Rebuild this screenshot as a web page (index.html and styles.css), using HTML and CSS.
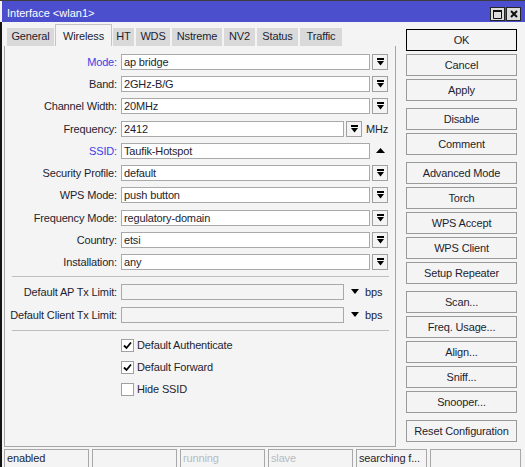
FILE: index.html
```html
<!DOCTYPE html>
<html>
<head>
<meta charset="utf-8">
<title>Interface</title>
<link rel="stylesheet" href="styles.css">
</head>
<body>
<div class="window">
  <div class="titlebar">
    <span class="title">Interface &lt;wlan1&gt;</span>
    <div class="tbtns">
      <span class="tbtn"><svg width="9" height="9" viewBox="0 0 9 9"><path d="M0.5 0.5H8.5V8.5H0.5Z" fill="none" stroke="#111"/><rect x="0" y="0" width="9" height="2" fill="#111"/></svg></span>
      <span class="tbtn"><svg width="8" height="8" viewBox="0 0 8 8"><path d="M1 1L7 7M7 1L1 7" stroke="#111" stroke-width="2"/></svg></span>
    </div>
  </div>
  <div class="frame">
    <div class="main">
      <div class="left">
        <div class="tabs">
          <div class="tab w-general">General</div>
          <div class="tab sel w-wireless">Wireless</div>
          <div class="tab w-ht">HT</div>
          <div class="tab w-wds">WDS</div>
          <div class="tab w-nstreme">Nstreme</div>
          <div class="tab w-nv2">NV2</div>
          <div class="tab w-status">Status</div>
          <div class="tab w-traffic">Traffic</div>
        </div>
        <div class="pane">
          <div class="group">
            <div class="row"><span class="lbl blue">Mode:</span><span class="field">ap bridge</span><span class="dd"><svg width="7" height="8" viewBox="0 0 7 8"><rect width="7" height="2"/><path d="M0 3H7L3.5 7.5Z"/></svg></span></div>
            <div class="row"><span class="lbl">Band:</span><span class="field">2GHz-B/G</span><span class="dd"><svg width="7" height="8" viewBox="0 0 7 8"><rect width="7" height="2"/><path d="M0 3H7L3.5 7.5Z"/></svg></span></div>
            <div class="row"><span class="lbl">Channel Width:</span><span class="field">20MHz</span><span class="dd"><svg width="7" height="8" viewBox="0 0 7 8"><rect width="7" height="2"/><path d="M0 3H7L3.5 7.5Z"/></svg></span></div>
            <div class="row"><span class="lbl">Frequency:</span><span class="field short">2412</span><span class="dd"><svg width="7" height="8" viewBox="0 0 7 8"><rect width="7" height="2"/><path d="M0 3H7L3.5 7.5Z"/></svg></span><span class="unit">MHz</span></div>
            <div class="row"><span class="lbl blue">SSID:</span><span class="field">Taufik-Hotspot</span><span class="up"><svg width="9" height="5" viewBox="0 0 9 5"><path d="M0 5H9L4.5 0Z"/></svg></span></div>
            <div class="row"><span class="lbl">Security Profile:</span><span class="field">default</span><span class="dd"><svg width="7" height="8" viewBox="0 0 7 8"><rect width="7" height="2"/><path d="M0 3H7L3.5 7.5Z"/></svg></span></div>
            <div class="row"><span class="lbl">WPS Mode:</span><span class="field">push button</span><span class="dd"><svg width="7" height="8" viewBox="0 0 7 8"><rect width="7" height="2"/><path d="M0 3H7L3.5 7.5Z"/></svg></span></div>
            <div class="row"><span class="lbl">Frequency Mode:</span><span class="field">regulatory-domain</span><span class="dd"><svg width="7" height="8" viewBox="0 0 7 8"><rect width="7" height="2"/><path d="M0 3H7L3.5 7.5Z"/></svg></span></div>
            <div class="row"><span class="lbl">Country:</span><span class="field">etsi</span><span class="dd"><svg width="7" height="8" viewBox="0 0 7 8"><rect width="7" height="2"/><path d="M0 3H7L3.5 7.5Z"/></svg></span></div>
            <div class="row"><span class="lbl">Installation:</span><span class="field">any</span><span class="dd"><svg width="7" height="8" viewBox="0 0 7 8"><rect width="7" height="2"/><path d="M0 3H7L3.5 7.5Z"/></svg></span></div>
          </div>
          <div class="sep"></div>
          <div class="row gap7"><span class="lbl">Default AP Tx Limit:</span><span class="field short off"></span><span class="down"><svg width="8" height="5" viewBox="0 0 8 5"><path d="M0 0H8L4 5Z"/></svg></span><span class="unit2">bps</span></div>
          <div class="row gap7"><span class="lbl">Default Client Tx Limit:</span><span class="field short off"></span><span class="down"><svg width="8" height="5" viewBox="0 0 8 5"><path d="M0 0H8L4 5Z"/></svg></span><span class="unit2">bps</span></div>
          <div class="sep gap7"></div>
          <div class="crow first"><span class="cb"><svg width="9" height="9" viewBox="0 0 9 9"><path d="M1 4.5L3.5 7L8 1.5" fill="none" stroke="#000" stroke-width="1.8"/></svg></span><span>Default Authenticate</span></div>
          <div class="crow"><span class="cb"><svg width="9" height="9" viewBox="0 0 9 9"><path d="M1 4.5L3.5 7L8 1.5" fill="none" stroke="#000" stroke-width="1.8"/></svg></span><span>Default Forward</span></div>
          <div class="crow"><span class="cb"></span><span>Hide SSID</span></div>
        </div>
      </div>
      <div class="buttons">
        <div class="bgroup">
          <div class="btn default">OK</div>
          <div class="btn">Cancel</div>
          <div class="btn">Apply</div>
        </div>
        <div class="bgroup">
          <div class="btn">Disable</div>
          <div class="btn">Comment</div>
        </div>
        <div class="bgroup">
          <div class="btn">Advanced Mode</div>
          <div class="btn">Torch</div>
          <div class="btn">WPS Accept</div>
          <div class="btn">WPS Client</div>
          <div class="btn">Setup Repeater</div>
        </div>
        <div class="bgroup">
          <div class="btn">Scan...</div>
          <div class="btn">Freq. Usage...</div>
          <div class="btn">Align...</div>
          <div class="btn">Sniff...</div>
          <div class="btn">Snooper...</div>
        </div>
        <div class="bgroup">
          <div class="btn">Reset Configuration</div>
        </div>
      </div>
    </div>
    <div class="status">
      <div class="cell c85">enabled</div>
      <div class="cell c85"></div>
      <div class="cell c85 dim">running</div>
      <div class="cell c85 dim">slave</div>
      <div class="cell c71">searching f...</div>
      <div class="cell c91"></div>
    </div>
  </div>
</div>
</body>
</html>
```
FILE: styles.css
```css
* { box-sizing: border-box; }
html, body { margin: 0; padding: 0; }
body {
  width: 525px;
  height: 467px;
  overflow: hidden;
  background: #f4f4f4;
  font-family: "Liberation Sans", Arial, sans-serif;
  font-size: 11px;
  letter-spacing: -0.15px;
  color: #1e1e30;
}
.window {
  height: 467px;
  display: flex;
  flex-direction: column;
  border-top: 1px solid #3c3c3c;
}
.titlebar {
  height: 21px;
  flex: none;
  margin-left: 2px;
  background: #4b4fce;
  color: #fff;
  display: flex;
  letter-spacing: 0;
}
.title {
  flex: 1;
  padding: 4px 0 0 5px;
  line-height: 17px;
  white-space: nowrap;
}
.tbtns {
  display: flex;
  gap: 1px;
  padding-top: 6px;
  padding-right: 4px;
}
.tbtn {
  width: 15px;
  height: 14px;
  border: 1px solid #262626;
  background: #dcdcdc;
  display: flex;
  align-items: center;
  justify-content: center;
}
.tbtn svg { display: block; }
.frame {
  flex: 1;
  display: flex;
  flex-direction: column;
  border-left: 2px solid #141414;
  padding-left: 2px;
}
.main {
  display: flex;
  height: 425px;
}
.left {
  width: 392px;
  display: flex;
  flex-direction: column;
}
.tabs {
  display: flex;
  align-items: flex-end;
  height: 24px;
  flex: none;
  padding-left: 2px;
}
.tab {
  height: 19px;
  border: 1px solid #f4f4f4;
  border-bottom: none;
  background: #d9d9d9;
  text-align: center;
  line-height: 16px;
  white-space: nowrap;
}
.tab.sel {
  height: 22px;
  background: #f4f4f4;
  border-color: #c4c4c4;
  padding-top: 3px;
}
.w-general { width: 49px; }
.w-wireless { width: 57px; }
.w-ht { width: 23px; }
.w-wds { width: 36px; }
.w-nstreme { width: 52px; }
.w-nv2 { width: 33px; }
.w-status { width: 43px; }
.w-traffic { width: 44px; }
.pane {
  flex: 1;
  border: 1px solid #a6a6a6;
  border-top: none;
  padding-top: 8px;
}
.group {
  display: flex;
  flex-direction: column;
  gap: 6.22px;
}
.row {
  display: flex;
  align-items: center;
  height: 16px;
}
.gap7 { margin-top: 7px; }
.lbl {
  width: 112px;
  margin-right: 4px;
  text-align: right;
  white-space: nowrap;
}
.blue { color: #4040e6; }
.field {
  width: 249px;
  height: 16px;
  border: 1px solid #a9a9a9;
  background: #fff;
  padding-left: 2px;
  line-height: 14px;
  white-space: nowrap;
  overflow: hidden;
}
.field.short { width: 223px; }
.field.off { background: #f4f4f4; }
.dd {
  width: 16px;
  height: 16px;
  margin-left: 2px;
  border: 1px solid #a0a0a0;
  background: #f4f4f4;
  display: flex;
  align-items: center;
  justify-content: center;
}
.dd svg { display: block; }
.unit { margin-left: 4px; }
.up { margin-left: 6px; display: flex; }
.down { margin-left: 7px; display: flex; }
.unit2 { margin-left: 6px; }
.sep {
  height: 1px;
  width: 377px;
  margin: 6px 0 0 7px;
  background: #bebebe;
}
.sep.gap7 { margin-top: 7px; }
.crow {
  display: flex;
  align-items: center;
  height: 13px;
  margin-left: 116px;
  margin-top: 9px;
}
.crow.first { margin-top: 8px; }
.cb {
  width: 13px;
  height: 13px;
  border: 1px solid #a0a0a0;
  background: #fff;
  margin-right: 3px;
  display: flex;
  align-items: center;
  justify-content: center;
}
.cb svg { display: block; }
.buttons {
  width: 111px;
  margin-left: 10px;
  padding-top: 7px;
  display: flex;
  flex-direction: column;
  gap: 7px;
}
.bgroup {
  display: flex;
  flex-direction: column;
  gap: 3px;
}
.btn {
  height: 22px;
  border: 1px solid #9a9a9a;
  background: #f4f4f4;
  text-align: center;
  line-height: 20px;
  white-space: nowrap;
}
.btn.default { border-color: #000; }
.status {
  display: flex;
  gap: 3px;
  margin-top: 2px;
  height: 18px;
}
.cell {
  border: 1px solid #a8a8a8;
  border-bottom: none;
  padding-left: 2px;
  line-height: 16px;
  white-space: nowrap;
  overflow: hidden;
}
.c85 { width: 85px; }
.c71 { width: 71px; }
.c91 { width: 91px; }
.dim { color: #b4bcc4; }
```
